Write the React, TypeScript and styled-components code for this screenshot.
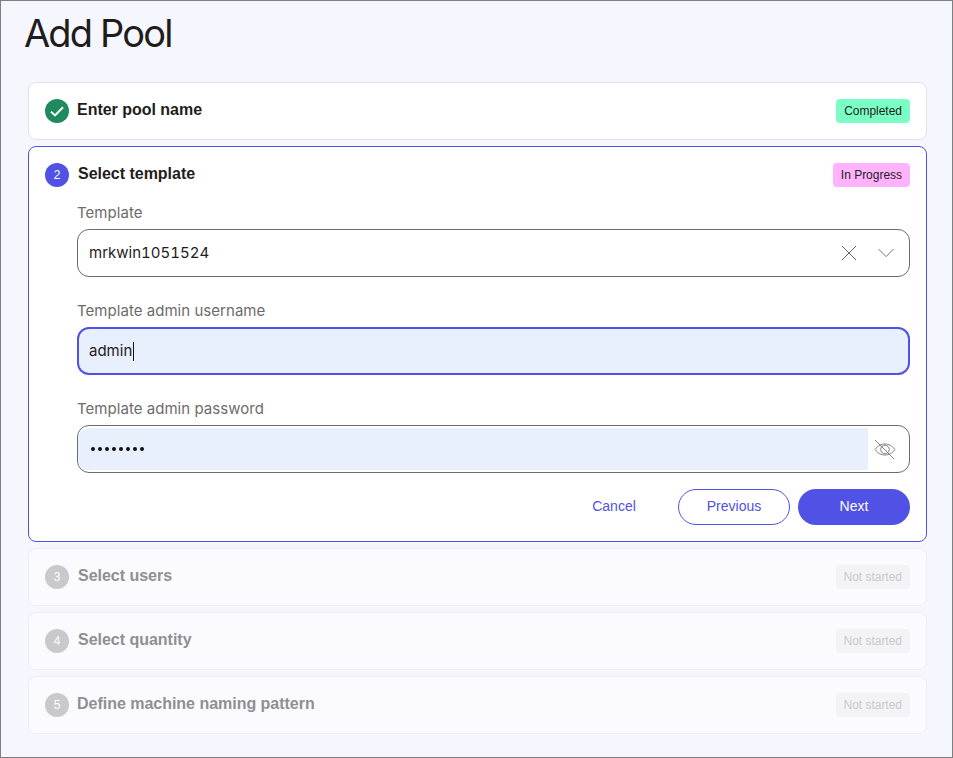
import React from "react";
import styled, { createGlobalStyle } from "styled-components";

const Global = createGlobalStyle`
  html, body { margin: 0; padding: 0; }
  body { background: #f6f7fe; font-family: "Liberation Sans", Arial, sans-serif; }
  * { box-sizing: border-box; }
`;

const Page = styled.div`
  width: 953px;
  height: 758px;
  border: 1px solid #7f7f7f;
  background: #f6f7fe;
  padding: 0 25px 0 24px;
  overflow: hidden;
`;
const Title = styled.h1`
  margin: 7px 0 23px -1px;
  height: 51px;
  font: 400 38px/51px Inter, sans-serif;
  letter-spacing: -1.85px;
  color: #1f1c1c;
`;
const Stack = styled.div`
  display: flex;
  flex-direction: column;
  gap: 6px;
  margin-left: 3px;
`;
const Card = styled.section<{ $active?: boolean; $muted?: boolean }>`
  border: 1px solid ${(p) => (p.$active ? "#4f52e5" : p.$muted ? "#eeeef5" : "#e2e3ea")};
  border-radius: 8px;
  background: ${(p) => (p.$muted ? "#fbfbff" : "#ffffff")};
  padding: 16px;
`;
const Head = styled.div`
  display: flex;
  align-items: flex-start;
  justify-content: space-between;
  height: 24px;
`;
const HeadLeft = styled.div<{ $gap: number }>`
  display: flex;
  align-items: flex-start;
  gap: ${(p) => p.$gap}px;
`;
const Circle = styled.div<{ $bg: string }>`
  width: 24px;
  height: 24px;
  border-radius: 50%;
  background: ${(p) => p.$bg};
  color: #fff;
  font-size: 12px;
  display: flex;
  align-items: center;
  justify-content: center;
`;
const StepTitle = styled.div<{ $muted?: boolean }>`
  font: 700 16px/21px "Liberation Sans", Arial, sans-serif;
  letter-spacing: -0.02px;
  color: ${(p) => (p.$muted ? "#8f8e93" : "#1f1c1c")};
`;
const Badge = styled.div<{ $bg: string; $fg: string }>`
  height: 24px;
  padding: 0 8px;
  border-radius: 4px;
  background: ${(p) => p.$bg};
  color: ${(p) => p.$fg};
  font-size: 12px;
  letter-spacing: -0.02px;
  line-height: 24px;
`;
const Form = styled.div`
  margin: 16px 0 0 32px;
`;
const Field = styled.div`
  margin-bottom: 24px;
`;
const Label = styled.div`
  font: 400 15px/20px Inter, sans-serif;
  letter-spacing: 0.04px;
  color: #6e6b6b;
  height: 20px;
  margin-bottom: 6px;
`;
const Box = styled.div<{ $focus?: boolean }>`
  height: 48px;
  border-radius: 12px;
  border: ${(p) => (p.$focus ? "2px solid #4f52e5" : "1px solid #6b6b6b")};
  background: ${(p) => (p.$focus ? "#e8effd" : "#fff")};
  display: flex;
  align-items: center;
  padding: 0 ${(p) => (p.$focus ? "10px" : "11px")};
  color: #1f1c1c;
  font: 400 15px/20px Inter, sans-serif;
  font-variant-numeric: tabular-nums;
  overflow: hidden;
`;
const Caret = styled.span`
  display: inline-block;
  width: 1px;
  height: 19px;
  background: #111;
  margin-left: 1px;
`;
const Value = styled.span`
  flex: 1;
  display: flex;
  align-items: center;
`;
const PwFill = styled.div`
  flex: 1;
  align-self: stretch;
  margin: 2px 0 2px -11px;
  padding-left: 13px;
  background: #e8effd;
  border-radius: 10px 0 0 10px;
  display: flex;
  align-items: center;
  gap: 3px;
`;
const Dot = styled.span`
  width: 4px;
  height: 4px;
  border-radius: 50%;
  background: #111;
`;
const Icons = styled.div<{ $shift: number }>`
  display: flex;
  align-items: center;
  margin-right: ${(p) => p.$shift}px;
`;
const IconSlot = styled.span<{ $w: number }>`
  width: ${(p) => p.$w}px;
  display: flex;
  justify-content: center;
`;
const Actions = styled.div`
  display: flex;
  justify-content: flex-end;
  align-items: center;
  gap: 8px;
  margin-top: -8px;
`;
const Btn = styled.button<{ $kind: "text" | "outline" | "fill" }>`
  height: 36px;
  width: 112px;
  border-radius: 18px;
  font: 400 14px "Liberation Sans", Arial, sans-serif;
  padding: 0 0 2px;
  color: ${(p) => (p.$kind === "fill" ? "#fff" : "#4f52e5")};
  background: ${(p) => (p.$kind === "fill" ? "#4f52e5" : "transparent")};
  border: ${(p) => (p.$kind === "outline" ? "1px solid #4f52e5" : "none")};
`;

const Check = () => (
  <svg width="14" height="11" viewBox="0 0 14 11" fill="none">
    <path d="M1 5.600 5 9.400 13 1.200" stroke="#fff" strokeWidth="2" />
  </svg>
);
const Cross = () => (
  <svg width="16" height="16" viewBox="0 0 16 16" fill="none">
    <path d="M1 1 15 15M15 1 1 15" stroke="#666" strokeWidth="1" />
  </svg>
);
const Chevron = () => (
  <svg width="16" height="10" viewBox="0 0 16 10" fill="none">
    <path d="M.5 1 8 8.600 15.500 1" stroke="#777" strokeWidth="1" />
  </svg>
);
const EyeOff = () => (
  <svg width="22" height="21" viewBox="0 0 22 21" fill="none" stroke="#808080" strokeWidth="1">
    <path d="M1 10.500C4 6.500 7.500 5 11 5s7 1.500 10 5.500C18 14.500 14.500 16 11 16s-7-1.500-10-5.500Z" />
    <circle cx="11" cy="10.500" r="4.300" />
    <path d="M1 1 20 20" />
  </svg>
);

const muted = [
  { n: 3, t: "Select users", g: 9 },
  { n: 4, t: "Select quantity", g: 9 },
  { n: 5, t: "Define machine naming pattern", g: 8 },
];

export default function App() {
  return (
    <Page>
      <Global />
      <Title>Add Pool</Title>
      <Stack>
        <Card>
          <Head>
            <HeadLeft $gap={8}>
              <Circle $bg="#1f8a5d"><Check /></Circle>
              <StepTitle>Enter pool name</StepTitle>
            </HeadLeft>
            <Badge $bg="#7affc4" $fg="#1f1c1c">Completed</Badge>
          </Head>
        </Card>
        <Card $active>
          <Head>
            <HeadLeft $gap={9}>
              <Circle $bg="#4f52e5">2</Circle>
              <StepTitle>Select template</StepTitle>
            </HeadLeft>
            <Badge $bg="#ffb3fd" $fg="#1f1c1c">In Progress</Badge>
          </Head>
          <Form>
            <Field>
              <Label>Template</Label>
              <Box>
                <Value>mrkwin1051524</Value>
                <Icons $shift={-6}>
                  <IconSlot $w={37}><Cross /></IconSlot>
                  <IconSlot $w={37}><Chevron /></IconSlot>
                </Icons>
              </Box>
            </Field>
            <Field>
              <Label>Template admin username</Label>
              <Box $focus>
                <Value>admin<Caret /></Value>
              </Box>
            </Field>
            <Field>
              <Label>Template admin password</Label>
              <Box>
                <PwFill>
                  {Array.from({ length: 8 }).map((_, i) => <Dot key={i} />)}
                </PwFill>
                <Icons $shift={-4}>
                  <IconSlot $w={34}><EyeOff /></IconSlot>
                </Icons>
              </Box>
            </Field>
            <Actions>
              <Btn $kind="text">Cancel</Btn>
              <Btn $kind="outline">Previous</Btn>
              <Btn $kind="fill">Next</Btn>
            </Actions>
          </Form>
        </Card>
        {muted.map((m) => (
          <Card $muted key={m.n}>
            <Head>
              <HeadLeft $gap={m.g}>
                <Circle $bg="#c9c8cd">{m.n}</Circle>
                <StepTitle $muted>{m.t}</StepTitle>
              </HeadLeft>
              <Badge $bg="#f3f3f7" $fg="#c8c8cc">Not started</Badge>
            </Head>
          </Card>
        ))}
      </Stack>
    </Page>
  );
}
